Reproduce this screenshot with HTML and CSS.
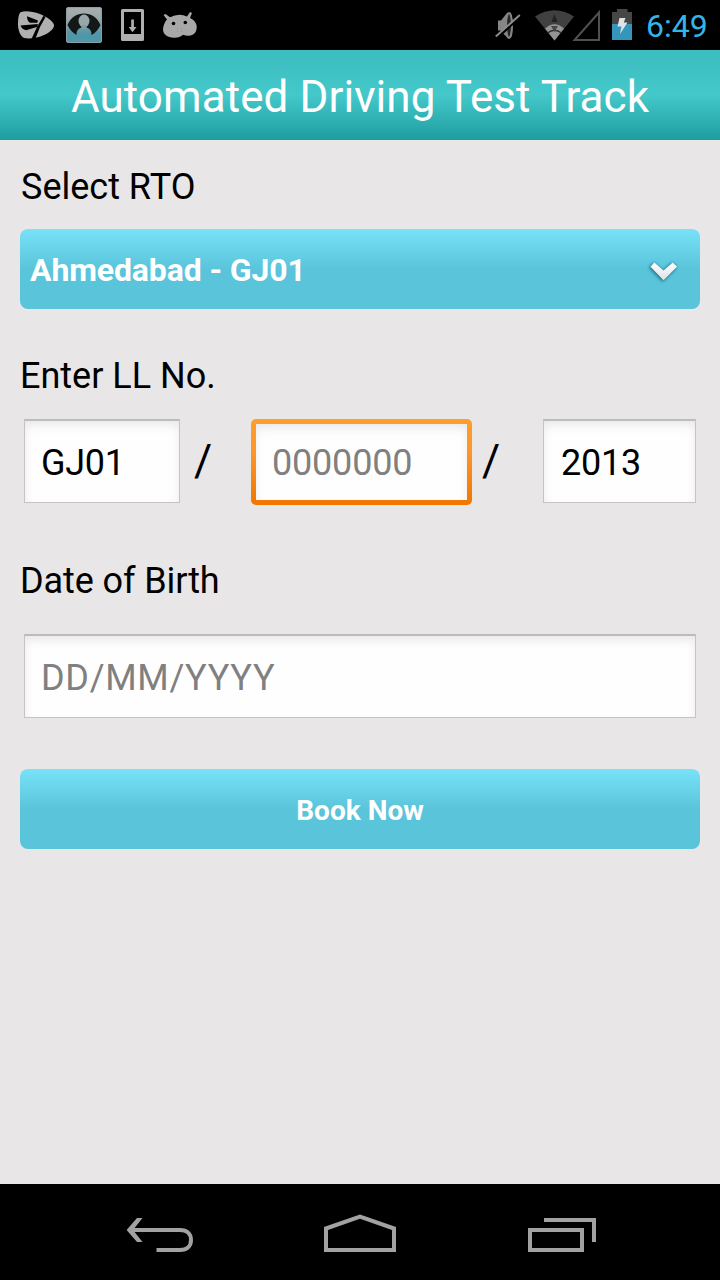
FILE: index.html
```html
<!DOCTYPE html>
<html lang="en">
<head>
<meta charset="utf-8">
<title>Automated Driving Test Track</title>
<link rel="stylesheet" href="styles.css">
</head>
<body>
<div class="screen">
  <div class="status">
    <svg class="status-icons" width="220" height="50" viewBox="0 0 220 50">
      <defs>
        <linearGradient id="contact" x1="0" y1="0" x2="0" y2="1">
          <stop offset="0" stop-color="#aaadae"/><stop offset="0.3" stop-color="#9ba8ac"/><stop offset="0.75" stop-color="#5197a8"/><stop offset="1" stop-color="#4b98ab"/>
        </linearGradient>
      </defs>
      <path fill="#b0b0b0" d="M21 12C27 10 38 12 46 17C51 20 54 23 54 25.500C54 29 49 33 44 35C38 38 30 39 24 38C20 36 18 30 18 24C18 17 19 13 21 12Z"/>
      <path fill="#000" d="M27 16.300L38 20.500L37.300 22.800H30Q27 21 27 16.300ZM20.500 25.600L38 24L37 27L26 30.300Q22 29.500 20.500 25.600ZM43.500 15.800L45.500 17L40 27L35.500 38.500L31.500 39L37 27Z"/>
      <rect x="66.500" y="7.500" width="35" height="35" rx="1.500" fill="url(#contact)" stroke="#8c9fa4"/>
      <path fill="#131718" d="M67.500 25C71 17 77 13.500 84 13.500S97 17 100.500 25C98 30 95 33.500 91.500 35C91.500 30.500 90 28.500 86.500 27.500H81.500C78 28.500 76.500 30.500 76.500 35C73 33 70 30 67.500 25Z"/>
      <ellipse cx="84" cy="21" rx="5.500" ry="6.500" fill="#99a7aa"/>
      <path fill="#7b9fa8" d="M81.500 25H86.500V29H81.500Z"/>
      <path fill="#b0b0b0" fill-rule="evenodd" d="M122.500 9H142.500Q144 9 144 10.500V39.500Q144 41 142.500 41H122.500Q121 41 121 39.500V10.500Q121 9 122.500 9ZM124 12V34H141V12Z"/>
      <path fill="#b0b0b0" d="M131.200 19.500H133.900V27H136.500L132.500 32.300L128.700 27H131.200Z"/>
      <path fill="#a8a8a8" d="M165.500 14L170 17.200Q179 12.500 187 16.500L190 12L192 13L190 18Q195 20 196.500 25C197.500 30 195 35 190.500 35.500Q187 36.500 183 34.800Q179.500 38 174 37.700C167 37.500 163 34.500 163 29C163.500 25 165 21.500 167 19.500L163.500 15Z"/>
      <circle cx="173.500" cy="23.500" r="1.800"/><circle cx="185.300" cy="22.500" r="1.800"/>
      <path fill="#929292" d="M177 28h1v1h-1zM181 28h1v1h-1zM177 31h1v1h-1zM181 31h1v1h-1z"/>
    </svg>
    <div class="status-right">
      <svg width="160" height="50" viewBox="480 0 160 50">
        <path fill="#858585" d="M498 20.500H501L507 13V37L503.500 34L500.500 30.500H498Z"/>
        <ellipse cx="509" cy="25.500" rx="3" ry="12.500" fill="#252525" stroke="#858585" stroke-width="2"/>
        <path d="M497 38L521 16" stroke="#000" stroke-width="2.500"/>
        <path d="M495.800 36.500L519.800 15" stroke="#8d8d8d" stroke-width="2"/>
        <path fill="#404040" d="M535 16.500Q554.500 4 574 16.500L554.500 40.500Z"/>
        <path fill="#242424" d="M554.500 14L557.700 22H551.300Z"/>
        <path fill="#949494" d="M545 28.500Q554.500 20 564 28.500L554.500 40.500Z"/>
        <path fill="none" stroke="#303030" stroke-width="1.500" d="M547.500 33Q554.500 27.500 561.500 33"/>
        <path fill="#484848" d="M551 26H558L554.500 32Z"/>
        <path fill="none" stroke="#505050" stroke-width="2" d="M574.500 40H599V12.500Z"/>
        <path fill="#464646" d="M617 9H627.500V12H632V24H612V12H617Z"/>
        <path fill="#3595bb" d="M612 24H632V40H612Z"/>
        <path fill="#e0e3e4" d="M619.500 18H625.500L623.800 22.500H627.500L620 34L621.500 26.500H617.500Z"/>
      </svg>
      <span class="clock">6:49</span>
    </div>
  </div>
  <header class="titlebar"><h1 class="title">Automated Driving Test Track</h1></header>
  <main class="form">
    <div class="label label-rto">Select RTO</div>
    <div class="select">
      <span class="select-text">Ahmedabad - GJ01</span>
      <svg class="chevron" width="36" height="30" viewBox="646 254 36 30">
        <defs><linearGradient id="chev" x1="0" y1="0" x2="0" y2="1"><stop offset="0" stop-color="#fff"/><stop offset="1" stop-color="#d8e2e5"/></linearGradient></defs>
        <path fill="url(#chev)" d="M654.300 262.500L663.500 270.500L672.700 262.500L677 266.800L663.500 280.300L650.500 266.800Z"/>
      </svg>
    </div>
    <div class="label label-ll">Enter LL No.</div>
    <div class="row">
      <input class="field field-code" type="text" value="GJ01">
      <span class="slash slash-one">/</span>
      <div class="focus"><input class="field field-number" type="text" placeholder="0000000"></div>
      <span class="slash slash-two">/</span>
      <input class="field field-year" type="text" value="2013">
    </div>
    <div class="label label-dob">Date of Birth</div>
    <input class="field field-dob" type="text" placeholder="DD/MM/YYYY">
    <button class="book">Book Now</button>
  </main>
  <nav class="navbar">
    <svg width="720" height="96" viewBox="0 1184 720 96" fill="none" stroke="#a2a2a2" stroke-width="4">
      <path d="M131 1230H180C187 1230 191 1234 191 1240S187 1250 180 1250H156.500"/>
      <path fill="#a2a2a2" stroke="none" d="M137 1218H142.500L133 1230L142.500 1242H137L127 1230.500V1229.500Z"/>
      <path d="M326 1228.500L360 1216.500L394 1228.500V1250H326Z"/>
      <path d="M530 1230H582V1250H530ZM544 1220H594V1242"/>
    </svg>
  </nav>
</div>
</body>
</html>
```
FILE: styles.css
```css
* { box-sizing: border-box; }
body { margin: 0; background: #000; font-family: Roboto, sans-serif; }
.screen { display: flex; flex-direction: column; width: 720px; height: 1280px; overflow: hidden; background: #e8e6e7; }
.status { flex: none; display: flex; justify-content: space-between; height: 50px; background: #000; }
.status-right { display: flex; width: 240px; }
.status svg { flex: none; display: block; }
.clock { margin-left: 6px; color: #33b5e5; font-size: 32px; line-height: 52px; white-space: nowrap; }
.titlebar { flex: none; height: 90px; background: linear-gradient(#3cbdc0, #44c8ca 50%, #1e9d9f); text-align: center; }
.title { margin: 0; color: #fff; font-size: 44px; font-weight: 400; line-height: 94px; letter-spacing: 0.08px; white-space: nowrap; }
.form { flex: 1; display: flex; flex-direction: column; padding: 26px 20px 0; }
.label { height: 42px; color: #000; font-size: 36px; line-height: 42px; white-space: nowrap; }
.label-rto { padding-left: 1px; }
.select, .book { flex: none; width: 680px; height: 80px; border: 0; border-radius: 8px; background: linear-gradient(#78e2f8, #5ac4db 50%, #5ac4db); color: #fff; font-family: inherit; font-weight: 700; }
.select { display: flex; align-items: center; justify-content: space-between; margin-top: 21px; padding: 0 18px 0 10px; font-size: 32px; letter-spacing: -0.12px; }
.select-text { line-height: 78px; padding-top: 2px; }
.chevron { filter: drop-shadow(-1px 1px 1.500px #267a8d) drop-shadow(0 0 1px #3e96a9); }
.label-ll { margin-top: 46px; }
.row { display: flex; align-items: flex-start; height: 86px; margin: 22px 0 0 4px; }
.field { height: 84px; margin: 0; padding: 3px 16px 0; border: 1px solid #c5c3c4; border-top: 2px solid #bdbbbc; border-radius: 0; outline: 0; background: #fefefe; box-shadow: inset 0 5px 12px -2px #0000001a; color: #000; font-family: inherit; font-size: 36px; }
.field::placeholder { color: #808080; opacity: 1; }
.field-code { width: 156px; margin-right: 14px; letter-spacing: -0.3px; }
.slash { width: 18px; font-size: 44px; line-height: 52px; margin-top: 16px; color: #000; }
.focus { width: 221px; height: 86px; margin-left: 39px; padding: 5px; border-radius: 5px; background: linear-gradient(#ff9e2b, #fb962a 40%, #f27500); }
.field-number { width: 211px; height: 76px; padding-top: 1px; border: 0; letter-spacing: -0.2px; }
.slash-two { margin-left: 10px; }
.field-year { width: 153px; margin-left: 43px; padding-left: 17px; letter-spacing: -0.2px; }
.label-dob { margin-top: 55px; letter-spacing: -0.1px; }
.field-dob { flex: none; width: 672px; margin: 32px 4px 0; }
.field-dob::placeholder { letter-spacing: 0.7px; }
.book { margin-top: 51px; padding: 4px 0 0; font-size: 28px; line-height: 32px; }
.navbar { flex: none; height: 96px; background: #000; }
.navbar svg { display: block; }
```
